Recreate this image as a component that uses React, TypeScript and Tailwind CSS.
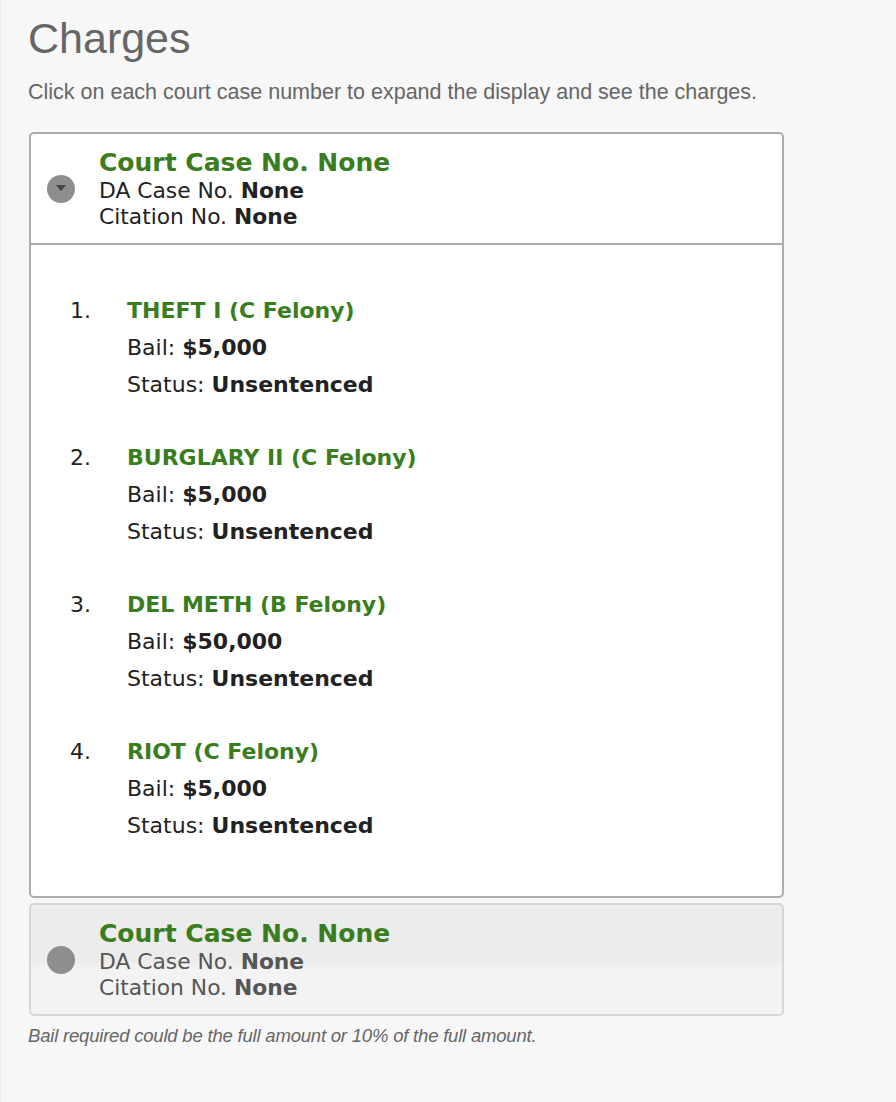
import React from "react";

const charges = [
  { title: "THEFT I (C Felony)", bail: "$5,000", status: "Unsentenced" },
  { title: "BURGLARY II (C Felony)", bail: "$5,000", status: "Unsentenced" },
  { title: "DEL METH (B Felony)", bail: "$50,000", status: "Unsentenced" },
  { title: "RIOT (C Felony)", bail: "$5,000", status: "Unsentenced" },
];

function CaseHeader({ open }: { open: boolean }) {
  return (
    <div className="flex items-center h-[109px] pl-[16px]">
      <div className="w-[28px] h-[28px] rounded-full bg-[#8e8e8e] flex items-center justify-center shrink-0">
        {open ? (
          <svg width="10" height="7" viewBox="0 0 10 7">
            <polygon points="0,0 10,0 5,6" fill="#444" />
          </svg>
        ) : (
          <svg width="7" height="10" viewBox="0 0 7 10">
            <polygon points="1,1 6,5 1,9" fill="#8a8a8a" />
          </svg>
        )}
      </div>
      <div className="ml-[24px] leading-[26px] text-[21.8px]">
        <div className="text-[25px] font-bold text-[#3a7d20] leading-[30px]">Court Case No. None</div>
        <div className={open ? "text-[#222]" : "text-[#555]"}>
          DA Case No. <b>None</b>
        </div>
        <div className={open ? "text-[#222]" : "text-[#555]"}>
          Citation No. <b>None</b>
        </div>
      </div>
    </div>
  );
}

export default function App() {
  return (
    <div className="min-h-[1102px] bg-[#f7f7f7] border-l border-[#ececec] pl-[27px] pt-[14px] font-['Liberation_Sans',Arial,sans-serif]">
      <h1 className="text-[43px] leading-[48px] text-[#666]">Charges</h1>
      <p className="mt-[16px] text-[21.5px] leading-[28px] text-[#666]">
        Click on each court case number to expand the display and see the charges.
      </p>

      <div className="font-['DejaVu_Sans',Verdana,sans-serif] w-[755px] ml-[1px]">
        {/* open case */}
        <div className="mt-[26px] bg-white border-2 border-[#acacac] rounded-[5px]">
          <CaseHeader open />
          <div className="border-t-2 border-[#acacac] pt-[47px] pb-[52px] text-[22px] text-[#222]">
            {charges.map((c, i) => (
              <div key={i} className="flex mb-[36px] last:mb-0">
                <div className="w-[96px] pl-[39px] leading-[37px]">{i + 1}.</div>
                <div className="leading-[37px]">
                  <div className="font-bold text-[#3a7d20]">{c.title}</div>
                  <div>
                    Bail: <b>{c.bail}</b>
                  </div>
                  <div>
                    Status: <b>{c.status}</b>
                  </div>
                </div>
              </div>
            ))}
          </div>
        </div>

        {/* closed case */}
        <div className="mt-[5px] border-2 border-[#d6d6d6] rounded-[5px] bg-[linear-gradient(#ececec_0%,#ececec_50%,#f3f3f3_60%,#f3f3f3_100%)]">
          <CaseHeader open={false} />
        </div>
      </div>

      <p className="mt-[6px] text-[18.5px] italic text-[#666] tracking-[-0.2px]">
        Bail required could be the full amount or 10% of the full amount.
      </p>
    </div>
  );
}
